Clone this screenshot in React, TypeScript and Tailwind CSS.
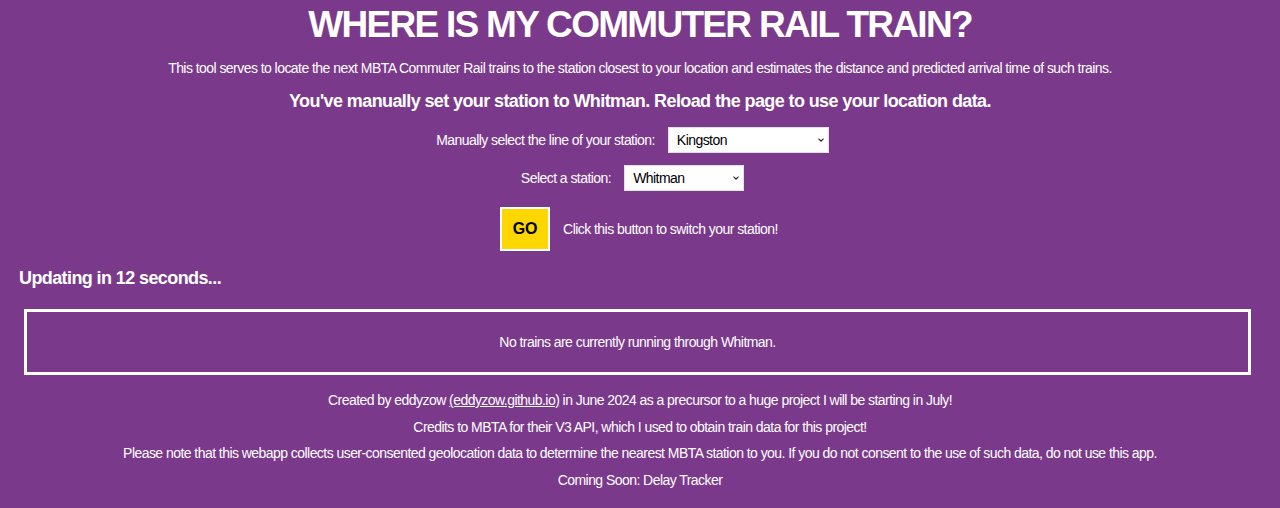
import { useState } from 'react';

const lines = ['Kingston', 'Greenbush', 'Middleborough/Lakeville', 'Fairmount', 'Providence/Stoughton', 'Framingham/Worcester'];
const stations = ['Whitman', 'Abington', 'South Weymouth', 'Hanson', 'Halifax', 'Kingston'];

function Select({ value, options, onChange, width }: { value: string; options: string[]; onChange: (v: string) => void; width: string }) {
  return (
    <div className={`relative ${width}`}>
      <select
        value={value}
        onChange={e => onChange(e.target.value)}
        className="appearance-none w-full h-[26px] pl-[8px] bg-white text-black border border-[#e2e2e2] outline-none"
      >
        {options.map(o => <option key={o}>{o}</option>)}
      </select>
      <svg className="absolute right-[5px] top-1/2 -translate-y-1/2 pointer-events-none" width="6" height="4" viewBox="0 0 6 4">
        <path d="M0.5 0.7 L3 3.2 L5.5 0.7" fill="none" stroke="#222" strokeWidth="1.1" />
      </svg>
    </div>
  );
}

export default function App() {
  const [line, setLine] = useState('Kingston');
  const [station, setStation] = useState('Whitman');

  return (
    <div className="min-h-screen bg-[#7b398c] text-white text-center text-[14px] tracking-[-0.55px] font-['Liberation_Sans',Arial,sans-serif]">
      <h1 className="pt-[3px] text-[37px] leading-[44px] tracking-[-1.7px] font-bold">WHERE IS MY COMMUTER RAIL TRAIN?</h1>
      <p className="mt-[13px] leading-[16px]">
        This tool serves to locate the next MBTA Commuter Rail trains to the station closest to your location and estimates the distance and predicted arrival time of such trains.
      </p>
      <h3 className="mt-[14px] text-[18px] leading-[22px] tracking-[-0.6px] font-bold">
        You've manually set your station to {station}. Reload the page to use your location data.
      </h3>

      {/* Station pickers */}
      <div className="mt-[15px] pr-[15px] flex items-center justify-center gap-[13px]">
        <label>Manually select the line of your station:</label>
        <Select value={line} options={lines} onChange={setLine} width="w-[161px]" />
      </div>
      <div className="mt-[12px] pr-[15px] flex items-center justify-center gap-[13px]">
        <label>Select a station:</label>
        <Select value={station} options={stations} onChange={setStation} width="w-[120px]" />
      </div>
      <div className="mt-[16px] pr-[2px] flex items-center justify-center gap-[13px]">
        <button className="w-[50px] h-[44px] bg-[#ffd700] border-2 border-white text-black text-[16px] tracking-normal font-bold">GO</button>
        <span>Click this button to switch your station!</span>
      </div>

      <h3 className="mt-[16px] pl-[19px] text-left text-[18px] leading-[22px] tracking-[-0.6px] font-bold">Updating in 12 seconds...</h3>

      <div className="mt-[20px] ml-[24px] mr-[29px] h-[66px] border-[3px] border-white flex items-center justify-center">
        <p>No trains are currently running through {station}.</p>
      </div>

      {/* Footer */}
      <div className="mt-[12px] leading-[26.7px]">
        <p>
          Created by eddyzow <a href="#" className="underline">(eddyzow.github.io)</a> in June 2024 as a precursor to a huge project I will be starting in July!
        </p>
        <p>Credits to MBTA for their V3 API, which I used to obtain train data for this project!</p>
        <p>
          Please note that this webapp collects user-consented geolocation data to determine the nearest MBTA station to you. If you do not consent to the use of such data, do not use this app.
        </p>
        <p>Coming Soon: Delay Tracker</p>
      </div>
    </div>
  );
}
